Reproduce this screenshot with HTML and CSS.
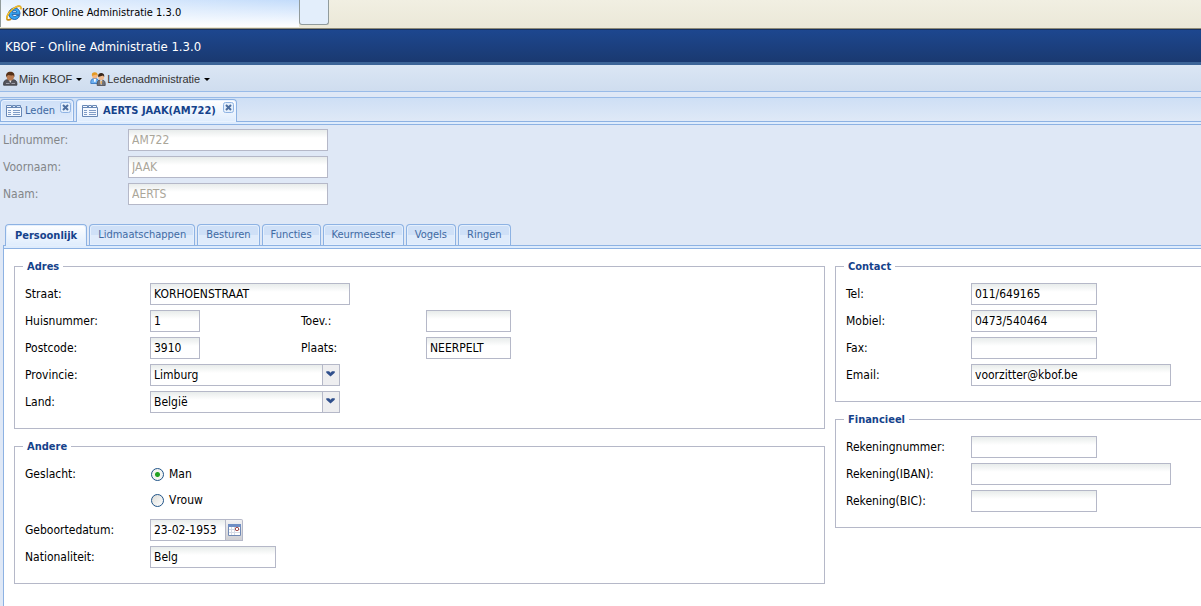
FILE: index.html
```html
<!DOCTYPE html>
<html lang="nl">
<head>
<meta charset="utf-8">
<title>KBOF Online Administratie 1.3.0</title>
<link rel="stylesheet" href="styles.css">
</head>
<body>
<div class="browser-tabs">
  <div class="browser-tab">
    <svg class="ie" viewBox="0 0 16 16" width="16" height="16" aria-hidden="true">
      <path d="M14 9.400H6.200c.2 1.400 1.300 2.100 2.500 2.100.9 0 1.600-.3 2-1h3c-.8 2.500-2.700 4-5.100 4-3.500 0-5.900-2.500-5.900-5.700S5.200 3 8.600 3c3.500 0 5.600 2.600 5.400 6.400zM6.300 7.200h4.500C10.600 6 9.800 5.400 8.600 5.400S6.500 6.100 6.300 7.200z" fill="#38a4ee" stroke="#0d4f9e" stroke-width=".8"/>
      <path d="M14.600 4.200C15.500 1 13.300.4 10.500 1.700 5 4.200.2 10.200.9 13.700c.4 1.700 2.500 1.500 4.300.4" fill="none" stroke="#c98a12" stroke-width="1.800"/>
      <path d="M14.600 4.200C15.500 1 13.300.4 10.500 1.700 5 4.200.2 10.200.9 13.700" fill="none" stroke="#ffd83a" stroke-width="1"/>
    </svg>
    <span>KBOF Online Administratie 1.3.0</span>
  </div>
  <button class="browser-new" type="button" aria-label="Nieuw tabblad"></button>
</div>

<header class="app-header"><h1>KBOF - Online Administratie 1.3.0</h1></header>

<nav class="toolbar">
  <button class="menu-button" type="button">
    <svg width="15" height="16" viewBox="0 0 15 16" aria-hidden="true">
      <path d="M.6 14.200c-.3-3.600.8-5 3.400-5.500h6.500c2.600.5 3.700 1.900 3.400 5.500z" fill="#55555c" stroke="#36363b" stroke-width=".8"/>
      <path d="M3.500 5.200C3.500 2.500 5 1.500 7.300 1.500s3.800 1 3.800 3.700-1.600 4.600-3.800 4.600-3.800-1.900-3.800-4.600z" fill="#b87a52"/>
      <path d="M3.200 6C2.700 2.200 4.500.8 7.300.8s4.600 1.400 4.100 5.200L10.300 4.300C8.500 4.600 6.500 4.300 5 4z" fill="#553018"/>
      <path d="M6.100 9.600h2.400L7.300 12z" fill="#eee"/>
      <path d="M3 12.500h3.500M8.500 12.500H12" stroke="#a0a0aa"/>
    </svg>
    <span>Mijn KBOF</span><i class="arrow"></i>
  </button>
  <button class="menu-button" type="button">
    <svg width="16" height="16" viewBox="0 0 16 16" aria-hidden="true">
      <path d="M.8 12.500C.5 9.300 1.500 8 3.500 7.600h2.800c1.700.5 2.500 1.800 2.500 4.900z" fill="#6cb0f2" stroke="#2d6fba" stroke-width=".8"/>
      <circle cx="4.800" cy="4.800" r="2.800" fill="#f5b57e"/>
      <path d="M1.900 5C1.500 2.200 2.700 1.300 4.700 1.300S7.900 2.200 7.600 5L6.300 3.500z" fill="#e39a24"/>
      <path d="M3.800 8h2.200l-.6 3h-1z" fill="#fff"/>
      <path d="M7.200 14.500c-.3-3.600.6-5 2.600-5.500h2.800c2 .5 2.900 1.900 2.600 5.500z" fill="#70737b" stroke="#4b4b50" stroke-width=".8"/>
      <circle cx="11.200" cy="6" r="2.900" fill="#f0b98d"/>
      <path d="M8.200 6C7.800 3 9.200 2 11.200 2s3.400 1 3 4L13 4.500z" fill="#35251a"/>
      <path d="M10.100 9.300h2.200l-.5 4.200h-1.200z" fill="#fff"/>
      <path d="M11.200 10v3" stroke="#d98a1c"/>
    </svg>
    <span>Ledenadministratie</span><i class="arrow"></i>
  </button>
</nav>

<div class="doc-tabs" role="tablist">
  <div class="doc-tab">
    <button class="doc-title" type="button" role="tab">
      <svg width="16" height="16" viewBox="0 0 16 16" aria-hidden="true"><path d="M.5 2.500h5v2h10v9H.5z" fill="#f4f8fe" stroke="#6787b5"/><path d="M6.500 4v-1.500h3V4M10.500 4v-1.500h4V4M1 4.500h14" fill="none" stroke="#6787b5"/><path d="M2 7.500h3M2 9.500h3M2 11.500h3M7 7.500h7M7 9.500h7M7 11.500h7" stroke="#7f9cc6"/></svg>
      <span>Leden</span>
    </button>
    <button class="close" type="button" aria-label="Leden sluiten"><svg width="11" height="11" viewBox="0 0 11 11"><rect x=".5" y=".5" width="10" height="10" rx="2" fill="#e4effc" stroke="#8fb3e3"/><path d="M3 3l5 5M8 3 3 8" stroke="#4c6d9e" stroke-width="2"/></svg></button>
  </div>
  <div class="doc-tab active">
    <button class="doc-title" type="button" role="tab" aria-selected="true">
      <svg width="16" height="16" viewBox="0 0 16 16" aria-hidden="true"><path d="M.5 2.500h5v2h10v9H.5z" fill="#f4f8fe" stroke="#6787b5"/><path d="M6.500 4v-1.500h3V4M10.500 4v-1.500h4V4M1 4.500h14" fill="none" stroke="#6787b5"/><path d="M2 7.500h3M2 9.500h3M2 11.500h3M7 7.500h7M7 9.500h7M7 11.500h7" stroke="#7f9cc6"/></svg>
      <span>AERTS JAAK(AM722)</span>
    </button>
    <button class="close" type="button" aria-label="AERTS JAAK sluiten"><svg width="11" height="11" viewBox="0 0 11 11"><rect x=".5" y=".5" width="10" height="10" rx="2" fill="#e4effc" stroke="#8fb3e3"/><path d="M3 3l5 5M8 3 3 8" stroke="#4c6d9e" stroke-width="2"/></svg></button>
  </div>
</div>
<div class="strip"></div>

<section class="summary">
  <div class="row"><label for="lidnummer">Lidnummer:</label><input class="w-large" id="lidnummer" value="AM722" disabled></div>
  <div class="row"><label for="voornaam">Voornaam:</label><input class="w-large" id="voornaam" value="JAAK" disabled></div>
  <div class="row"><label for="naam">Naam:</label><input class="w-large" id="naam" value="AERTS" disabled></div>
</section>

<main class="detail">
  <div class="sub-tabs" role="tablist">
    <button class="active" type="button" role="tab" aria-selected="true">Persoonlijk</button>
    <button type="button" role="tab">Lidmaatschappen</button>
    <button type="button" role="tab">Besturen</button>
    <button type="button" role="tab">Functies</button>
    <button type="button" role="tab">Keurmeester</button>
    <button type="button" role="tab">Vogels</button>
    <button type="button" role="tab">Ringen</button>
  </div>
  <div class="strip framed"></div>
  <form class="panel">
    <div class="column">
      <fieldset>
        <legend>Adres</legend>
        <div class="row"><label for="straat">Straat:</label><input class="w-large" id="straat" value="KORHOENSTRAAT"></div>
        <div class="pair">
          <div class="row"><label for="huisnummer">Huisnummer:</label><input class="w-tiny" id="huisnummer" value="1"></div>
          <div class="row"><label for="toev">Toev.:</label><input class="w-small" id="toev"></div>
        </div>
        <div class="pair">
          <div class="row"><label for="postcode">Postcode:</label><input class="w-tiny" id="postcode" value="3910"></div>
          <div class="row"><label for="plaats">Plaats:</label><input class="w-small" id="plaats" value="NEERPELT"></div>
        </div>
        <div class="row"><label for="provincie">Provincie:</label><span class="combo"><select id="provincie"><option>Limburg</option></select><svg class="trigger" width="17" height="20" viewBox="0 0 17 20" aria-hidden="true"><path d="M3.500 6h3l1.500 1.500L9.500 6h3v1.500L8 11.500 3.500 7.500z" fill="#2f4f8c"/></svg></span></div>
        <div class="row"><label for="land">Land:</label><span class="combo"><select id="land"><option>België</option></select><svg class="trigger" width="17" height="20" viewBox="0 0 17 20" aria-hidden="true"><path d="M3.500 6h3l1.500 1.500L9.500 6h3v1.500L8 11.500 3.500 7.500z" fill="#2f4f8c"/></svg></span></div>
      </fieldset>
      <fieldset>
        <legend>Andere</legend>
        <div class="row" role="radiogroup" aria-labelledby="geslacht">
          <span class="label" id="geslacht">Geslacht:</span>
          <div class="radios">
            <label><input type="radio" name="geslacht" checked>Man</label>
            <label><input type="radio" name="geslacht">Vrouw</label>
          </div>
        </div>
        <div class="row"><label for="geboorte">Geboortedatum:</label><span class="date"><input id="geboorte" value="23-02-1953"><button type="button" aria-label="Kies datum"><svg width="13" height="13" viewBox="0 0 13 13"><path d="M.5.5h12v11H.5z" fill="#fff" stroke="#7089b5"/><path d="M0 1.500h13" stroke="#6f8ec4" stroke-width="3"/><path d="M3.500 3v8M6.500 3v8M1 5.500h11M1 8.500h11" stroke="#d5dbe6"/><rect x="7.500" y="3.500" width="3" height="3" rx="1" fill="#fff" stroke="#8c1c1c"/></svg></button></span></div>
        <div class="row"><label for="nationaliteit">Nationaliteit:</label><input class="w-medium" id="nationaliteit" value="Belg"></div>
      </fieldset>
    </div>
    <div class="column side">
      <fieldset>
        <legend>Contact</legend>
        <div class="row"><label for="tel">Tel:</label><input class="w-medium" id="tel" value="011/649165"></div>
        <div class="row"><label for="mobiel">Mobiel:</label><input class="w-medium" id="mobiel" value="0473/540464"></div>
        <div class="row"><label for="fax">Fax:</label><input class="w-medium" id="fax"></div>
        <div class="row"><label for="email">Email:</label><input class="w-large" id="email" value="voorzitter@kbof.be"></div>
      </fieldset>
      <fieldset>
        <legend>Financieel</legend>
        <div class="row"><label for="rekening">Rekeningnummer:</label><input class="w-medium" id="rekening"></div>
        <div class="row"><label for="iban">Rekening(IBAN):</label><input class="w-large" id="iban"></div>
        <div class="row"><label for="bic">Rekening(BIC):</label><input class="w-medium" id="bic"></div>
      </fieldset>
    </div>
  </form>
</main>
</body>
</html>
```
FILE: styles.css
```css
* { box-sizing: border-box; }
html { height: 100%; }
body {
  margin: 0;
  min-height: 100%;
  display: flex;
  flex-direction: column;
  overflow: hidden;
  background: #dfe8f6;
  color: #000;
  font: 12px/16px "DejaVu Sans Condensed", Tahoma, sans-serif;
}
button, input, select { font: inherit; color: inherit; margin: 0; }
button { border: 0; padding: 0; background: none; display: flex; align-items: center; }
svg { display: block; flex: none; }

.browser-tabs, .app-header, .toolbar, .doc-tabs, .strip { flex: none; }
.browser-tabs {
  display: flex;
  height: 29px;
  padding-bottom: 1px;
  background: linear-gradient(#f1efe2, #ebe8d8);
  border-bottom: 1px solid #8e8b78;
}
.browser-tab {
  display: flex;
  align-items: center;
  width: 299px;
  padding: 0 0 2px 5px;
  border-left: 1px solid #919b9c;
  background: linear-gradient(90deg, #ffffff99, #ffffff00), linear-gradient(#c3dcfb, #ffffff);
  font-size: 11px;
  line-height: 14px;
}
.browser-new {
  width: 30px;
  height: 25px;
  border: 1px solid #919b9c;
  border-top: 0;
  border-radius: 0 0 3px 3px;
  background: #e3eefb;
}

.app-header {
  display: flex;
  align-items: center;
  height: 36px;
  padding: 2px 5px 0;
  border-top: 1px solid #16305f;
  border-bottom: 3px solid #3c6497;
  background: linear-gradient(#1d478f, #1a3970);
  color: #fff;
}
.app-header h1 { margin: 0; font-size: 13px; line-height: 18px; font-weight: normal; }

.toolbar {
  display: flex;
  gap: 8px;
  height: 27px;
  padding: 2px 3px 0;
  border-bottom: 1px solid #99bbe8;
  background: linear-gradient(#dbe6f4, #cfddef);
  color: #333;
  font: 11px/14px "Liberation Sans", Arial, sans-serif;
}
.menu-button { gap: 1px; }
.arrow { margin-left: 3px; border: 3px solid transparent; border-top-color: #000; border-bottom: 0; }

.doc-tabs {
  display: flex;
  align-items: flex-end;
  gap: 2px;
  height: 25px;
  margin-top: 5px;
  border-top: 1px solid #99bbe8;
  border-bottom: 1px solid #8db2e3;
  background: linear-gradient(#cedff5, #dfe9f7);
}
.doc-tab {
  display: flex;
  align-items: flex-start;
  gap: 5px;
  height: 22px;
  padding: 2px 2px 0 5px;
  border: 1px solid #8db2e3;
  border-bottom: 0;
  border-radius: 4px 4px 0 0;
  background: linear-gradient(#cfe0f7, #dfebfb);
  box-shadow: inset 0 0 0 1px #eaf3ff;
  color: #416aa3;
  font-size: 11px;
  line-height: 18px;
}
.doc-tab.active {
  gap: 7px;
  margin-bottom: -1px;
  height: 23px;
  background: linear-gradient(#ffffff, #deecfd);
  color: #15428b;
  font-weight: bold;
}
.doc-title { gap: 3px; }
.active .doc-title { gap: 5px; }
.strip { height: 3px; background: #deecfd; border-bottom: 1px solid #8db2e3; }
.strip.framed { border-left: 1px solid #8db2e3; }

.summary { display: flex; flex-direction: column; gap: 5px; padding: 4px 3px 0; color: #838689; }
.row { display: flex; align-items: flex-start; min-height: 22px; }
.row > label, .row > .label { width: 125px; flex: none; padding-top: 3px; }
input:not([type=radio]), select {
  height: 22px;
  padding: 0 3px 1px;
  border: 1px solid #b5b8c8;
  border-radius: 0;
  outline: 0;
  background: linear-gradient(#e8eceb, #ffffff 8px);
}
input:disabled { color: #aaa69a; }
.w-tiny { width: 50px; }
.w-small { width: 85px; }
.w-medium { width: 126px; }
.w-large { width: 200px; }

.detail { flex: 1; display: flex; flex-direction: column; padding: 19px 0 0 3px; }
.sub-tabs { display: flex; gap: 2px; padding-left: 2px; border-bottom: 1px solid #8db2e3; }
.sub-tabs button {
  height: 21px;
  padding: 0 8px;
  border: 1px solid #8db2e3;
  border-bottom: 0;
  border-radius: 4px 4px 0 0;
  background: linear-gradient(#cfe0f7 50%, #dfebfb 50%);
  box-shadow: inset 0 0 0 1px #e4effd;
  color: #416aa3;
  font-size: 11px;
}
.sub-tabs .active {
  height: 22px;
  margin-bottom: -1px;
  padding: 0 9px;
  background: linear-gradient(#ffffff, #deecfd);
  color: #15428b;
  font-weight: bold;
}
.panel {
  flex: 1;
  display: grid;
  grid-template-columns: 811px minmax(376px, 1fr);
  align-items: start;
  gap: 10px;
  padding: 9px 0 0 10px;
  border-left: 1px solid #8db2e3;
  background: #fff;
}
.column { display: flex; flex-direction: column; gap: 9px; }
.side fieldset { border-right: 0; }
fieldset {
  display: flex;
  flex-direction: column;
  gap: 5px;
  min-width: 0;
  margin: 0;
  padding: 9px 10px 15px;
  border: 1px solid #b5b8c8;
}
legend { padding: 2px 4px 0; margin-left: -2px; color: #15428b; font-size: 11px; line-height: 14px; font-weight: bold; }
.pair { display: grid; grid-template-columns: 276px 1fr; }
.combo, .date { display: flex; position: relative; }
.combo select { width: 190px; appearance: none; }
.trigger { position: absolute; right: 1px; top: 1px; border-left: 1px solid #b5b8c8; background: #eeeef0; pointer-events: none; }
.date input { width: 76px; }
.date button {
  width: 17px;
  height: 22px;
  justify-content: center;
  border: 1px solid #b5b8c8;
  border-left: 0;
  border-radius: 0 2px 0 0;
  background: linear-gradient(#f2f2f4, #cfcfd3);
}
.radios { display: flex; flex-direction: column; gap: 4px; padding-bottom: 3px; }
.radios label { display: flex; align-items: center; gap: 5px; height: 22px; }
.radios input {
  appearance: none;
  width: 13px;
  height: 13px;
  margin: 0 0 0 1px;
  border: 1px solid #1f5387;
  border-radius: 50%;
  background: linear-gradient(135deg, #dcdcd7, #ffffff);
}
.radios input:checked { background: radial-gradient(circle, #21a121 2px, #f4f4f1 3px); }
```
